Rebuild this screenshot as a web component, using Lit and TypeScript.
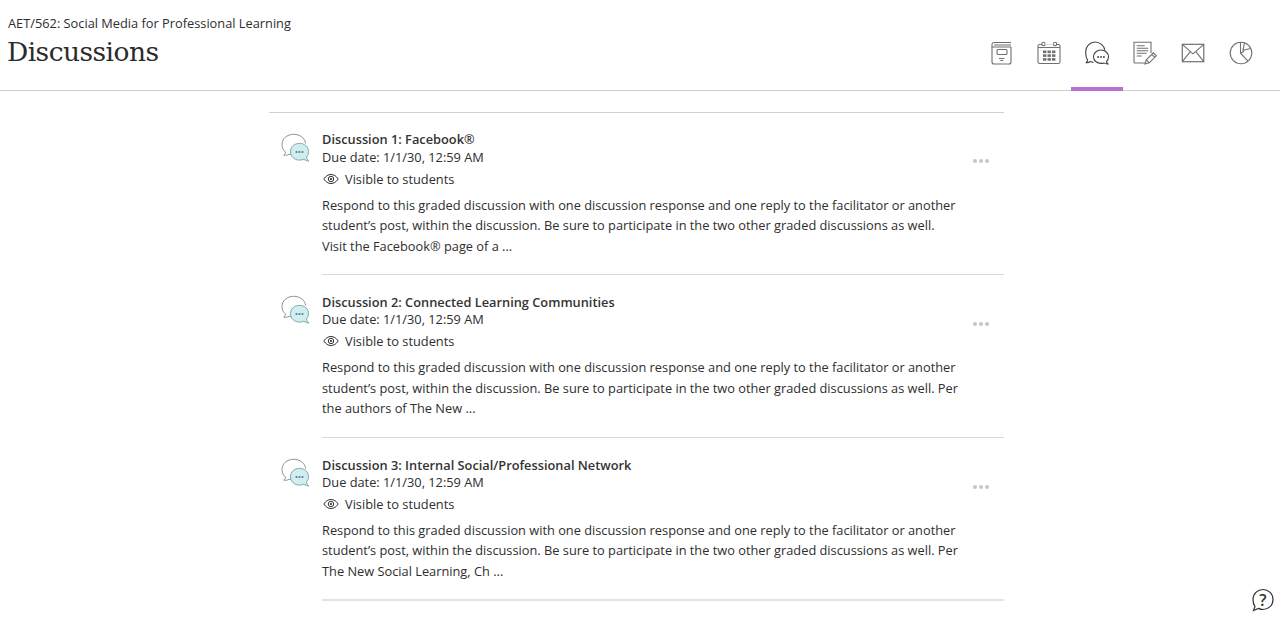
import { LitElement, html, css, svg } from "lit";
import { customElement } from "lit/decorators.js";

const items = [
  {
    title: "Discussion 1: Facebook®",
    lines: [
      "Respond to this graded discussion with one discussion response and one reply to the facilitator or another",
      "student’s post, within the discussion. Be sure to participate in the two other graded discussions as well.",
      "Visit the Facebook® page of a ...",
    ],
  },
  {
    title: "Discussion 2: Connected Learning Communities",
    lines: [
      "Respond to this graded discussion with one discussion response and one reply to the facilitator or another",
      "student’s post, within the discussion. Be sure to participate in the two other graded discussions as well. Per",
      "the authors of The New ...",
    ],
  },
  {
    title: "Discussion 3: Internal Social/Professional Network",
    lines: [
      "Respond to this graded discussion with one discussion response and one reply to the facilitator or another",
      "student’s post, within the discussion. Be sure to participate in the two other graded discussions as well. Per",
      "The New Social Learning, Ch ...",
    ],
  },
];

const navIcon = (content: unknown) => html`<svg class="nav-svg" width="34" height="34" viewBox="0 0 34 34" fill="none" stroke="#707070" stroke-width="1.100">${content}</svg>`;

const bookIcon = navIcon(svg`
  <path d="M8 11v15a2 2 0 0 0 2 2h15a2 2 0 0 0 2-2V11"/>
  <path d="M27 6.500H10.500a2 2 0 0 0-2.500 2V11h19M10 9h17"/>
  <rect x="13" y="13.500" width="10" height="5" rx="1"/>
  <path d="M15 22.500h5.500M16.200 24.500h3"/>
`);
const calIcon = navIcon(svg`
  <rect x="6" y="8.500" width="22" height="19" rx="1.600"/>
  <path d="M6 11.500h22"/>
  <circle cx="11.500" cy="8" r="1.700" fill="#fff"/><circle cx="23" cy="8" r="1.700" fill="#fff"/>
  <path d="M13.200 8h8.100" stroke="#fff" stroke-width="1.500"/>
  <g fill="#707070" stroke="none">
    <rect x="11" y="14.500" width="3.400" height="2.600"/><rect x="15.500" y="14.500" width="3.400" height="2.600"/><rect x="20" y="14.500" width="3.400" height="2.600"/>
    <rect x="11" y="18.300" width="3.400" height="2.600"/><rect x="15.500" y="18.300" width="3.400" height="2.600"/><rect x="20" y="18.300" width="3.400" height="2.600"/>
    <rect x="11" y="22.100" width="3.400" height="2.600"/><rect x="15.500" y="22.100" width="3.400" height="2.600"/><rect x="20" y="22.100" width="3.400" height="2.600"/>
  </g>
`);
const chatIcon = navIcon(svg`
  <g stroke="#444" stroke-width="1.100">
  <path d="M15 6c5 0 9.200 3.500 10 8.500M13.500 26.500c-1-.2-2-.5-3-1-1.200.9-2.600 1.300-4.200 1.100.7-.8 1.200-1.700 1.300-2.700C6 22 5.700 19 5.700 15.700 5.700 10.200 10 6 15 6"/>
  <path fill="#fff" d="M21 14c4.200 0 7.500 3 7.500 6.800 0 1.900-.8 3.600-2 4.800.1.800.6 1.700 1.400 2.300-1.500.1-2.900-.3-3.900-1-.9.400-1.900.5-3 .5-4.200 0-7.500-2.900-7.500-6.600S16.800 14 21 14z"/>
  </g>
  <g fill="#444" stroke="none"><circle cx="18.100" cy="21" r=".95"/><circle cx="21" cy="21" r=".95"/><circle cx="23.900" cy="21" r=".95"/></g>
`);
const editIcon = navIcon(svg`
  <path d="M17 27H7a1 1 0 0 1-1-1V6.200h17V17"/>
  <path d="M8.700 9.700h8M8.700 12.300h11.500M8.700 14.700h11.500M8.700 17.300h10M8.700 20h5"/>
  <path d="M17 28l1.300-4.200 7-7 3 3-7 7zM23.800 18.300l3 3M18.300 23.800l3 3"/>
`);
const mailIcon = navIcon(svg`
  <rect x="6.300" y="8.300" width="21.500" height="17.400" stroke-width="1.200"/>
  <path d="M6.300 8.300l10.700 9.500 10.800-9.500M6.300 25.700l8-10M27.800 25.700l-8-10"/>
`);
const pieIcon = navIcon(svg`
  <circle cx="17" cy="17" r="10.800"/>
  <path d="M16.500 6.200v11l7.300 7.600M16.500 17.200l3.700-2M20.500 6.700L19 14.300 26.700 12.500"/>
`);

const discIcon = html`<svg class="disc" width="34" height="36" viewBox="0 0 34 36" fill="none">
  <path stroke="#929292" stroke-width="1" d="M10 24.700c-.6-.1-1.200-.3-1.800-.5-1.600 1-3.600 1.300-5.400 1 1-.8 1.600-1.900 1.800-3C2.200 20.300 1 17.500 1 14.500 1 8.700 6 4.300 12.700 4.300c6.200 0 11.300 3.800 11.900 9.200"/>
  <path fill="#d0edf0" stroke="#7fa9ad" stroke-width="1" d="M18.500 13.400c5.300 0 9 3.600 9 8.200 0 2.100-.8 4-2.100 5.400.2 1.600 1.100 3 2.500 4-2-.1-3.700-.7-5-1.800-1.300.6-2.800.9-4.400.9-5.300 0-9-3.800-9-8.500s3.700-8.200 9-8.200z"/>
  <g fill="#56808a"><circle cx="15.500" cy="22" r="1.100"/><circle cx="18.500" cy="22" r="1.100"/><circle cx="21.500" cy="22" r="1.100"/></g>
</svg>`;

const eyeIcon = html`<svg class="eye" width="16" height="12" viewBox="0 0 16 12" fill="none" stroke="#333" stroke-width="1">
  <path d="M.8 6C2.800 3 5.200 1.500 8 1.500S13.200 3 15.200 6C13.200 9 10.800 10.500 8 10.500S2.800 9 .8 6z"/>
  <circle cx="8" cy="6" r="2.700"/><circle cx="8" cy="6" r=".7" fill="#333"/>
</svg>`;

@customElement("app-root")
export class AppRoot extends LitElement {
  static styles = css`
    :host {
      display: block;
      width: 1280px;
      height: 618px;
      overflow: hidden;
      background: #fff;
      color: #2e2e2e;
      font-family: "Open Sans", sans-serif;
      position: relative;
    }
    .header {
      height: 91px;
      box-sizing: border-box;
      border-bottom: 1px solid #cfcfcf;
      display: flex;
      justify-content: space-between;
      align-items: flex-end;
      padding-left: 8px;
      padding-right: 15px;
    }
    .crumb {
      font-size: 12.800px;
      line-height: 18px;
      margin-top: 14px;
    }
    .title-block {
      align-self: flex-start;
    }
    h1 {
      margin: 1px 0 0 -1px;
      font-family: "DejaVu Serif", serif;
      font-weight: 400;
      font-size: 26.500px;
      line-height: 38px;
      letter-spacing: -0.55px;
      color: #2b2b2b;
    }
    .nav {
      display: flex;
      height: 90px;
    }
    .nav-item {
      width: 48px;
      height: 91px;
      box-sizing: border-box;
      display: flex;
      justify-content: center;
      padding-top: 36px;
      position: relative;
      overflow: visible;
    }
    .nav-svg { flex: none; }
    .nav-item.active::after {
      content: "";
      position: absolute;
      left: -2px;
      right: -2px;
      bottom: 0;
      height: 4px;
      background: #bd6fcf;
    }
    .list {
      width: 735px;
      margin-left: 269px;
      margin-top: 20.750px;
      border-top: 1px solid #cfcfcf;
    }
    .row {
      display: grid;
      grid-template-columns: 53px 1fr;
      height: 162.670px;
      box-sizing: border-box;
    }
    .row:last-child .body { border-bottom: 2px solid #e4e4e4; }
    .icon-cell { padding-top: 17px; padding-left: 12px; }
    .body {
      position: relative;
      border-bottom: 1px solid #d8d8d8;
      padding-top: 17.500px;
      font-size: 12.800px;
    }
    .name { font-weight: 600; line-height: 18.500px; color: #333; }
    .due { line-height: 17.500px; }
    .vis {
      display: flex;
      align-items: center;
      gap: 6px;
      line-height: 18px;
      margin-top: 3.500px;
      padding-left: 1px;
    }
    .desc {
      margin-top: 7px;
      line-height: 20.400px;
    }
    .desc div { white-space: nowrap; }
    .more {
      position: absolute;
      right: 15px;
      top: 46.500px;
      display: flex;
      gap: 2px;
    }
    .more span { width: 4px; height: 4px; background: #c6c6c6; border-radius: 50%; }
    .help { position: absolute; left: 1250.500px; top: 588px; }
  `;

  render() {
    return html`
      <div class="header">
        <div class="title-block">
          <div class="crumb">AET/562: Social Media for Professional Learning</div>
          <h1>Discussions</h1>
        </div>
        <nav class="nav">
          <div class="nav-item">${bookIcon}</div>
          <div class="nav-item">${calIcon}</div>
          <div class="nav-item active">${chatIcon}</div>
          <div class="nav-item">${editIcon}</div>
          <div class="nav-item">${mailIcon}</div>
          <div class="nav-item">${pieIcon}</div>
        </nav>
      </div>
      <div class="list">
        ${items.map(
          (it) => html`
            <div class="row">
              <div class="icon-cell">${discIcon}</div>
              <div class="body">
                <div class="name">${it.title}</div>
                <div class="due">Due date: 1/1/30, 12:59 AM</div>
                <div class="vis">${eyeIcon}<span>Visible to students</span></div>
                <div class="desc">${it.lines.map((l) => html`<div>${l}</div>`)}</div>
                <div class="more"><span></span><span></span><span></span></div>
              </div>
            </div>
          `
        )}
      </div>
      <svg class="help" width="24" height="24" viewBox="0 0 24 24" fill="none" stroke="#333" stroke-width="1.200">
        <path d="M12 1.500c5.500 0 10 4.200 10 10s-4.500 10-10 10c-1.600 0-3.200-.4-4.500-1.100L2.500 22.500l1.500-4C2.700 16.800 2 14.400 2 11.500 2 5.700 6.500 1.500 12 1.500z"/>
        <text x="12" y="17.500" text-anchor="middle" font-family="Open Sans" font-size="16" font-weight="600" fill="#333" stroke="none">?</text>
      </svg>
    `;
  }
}
